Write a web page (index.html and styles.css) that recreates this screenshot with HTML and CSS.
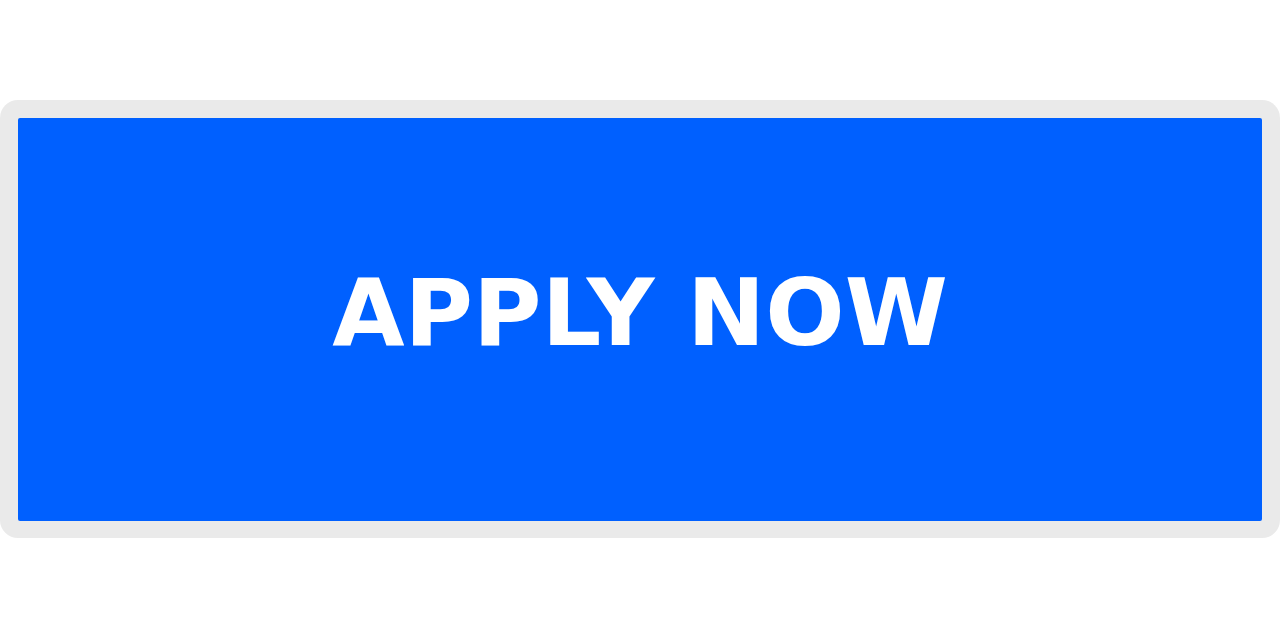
FILE: index.html
```
<!DOCTYPE html>
<html>
<head>
<meta charset="utf-8">
<link rel="stylesheet" href="styles.css">
</head>
<body>
<div class="page">
  <div class="frame">
    <div class="button">
      <span class="label">APPLY NOW</span>
    </div>
  </div>
</div>
</body>
</html>
```
FILE: styles.css
```
html, body {
  margin: 0;
  padding: 0;
  background: #ffffff;
}
.page {
  width: 1280px;
  height: 640px;
  padding-top: 100px;
  box-sizing: border-box;
}
.frame {
  height: 438px;
  background: #eaeaea;
  border-radius: 18px;
  padding: 18px;
  box-sizing: border-box;
}
.button {
  height: 403px;
  background: #0060ff;
  border-radius: 2px;
  display: flex;
  align-items: center;
  justify-content: center;
  padding-bottom: 14px;
  box-sizing: border-box;
}
.label {
  font-family: "DejaVu Sans", sans-serif;
  font-weight: bold;
  font-size: 93.5px;
  color: #ffffff;
  line-height: 1;
}
```
